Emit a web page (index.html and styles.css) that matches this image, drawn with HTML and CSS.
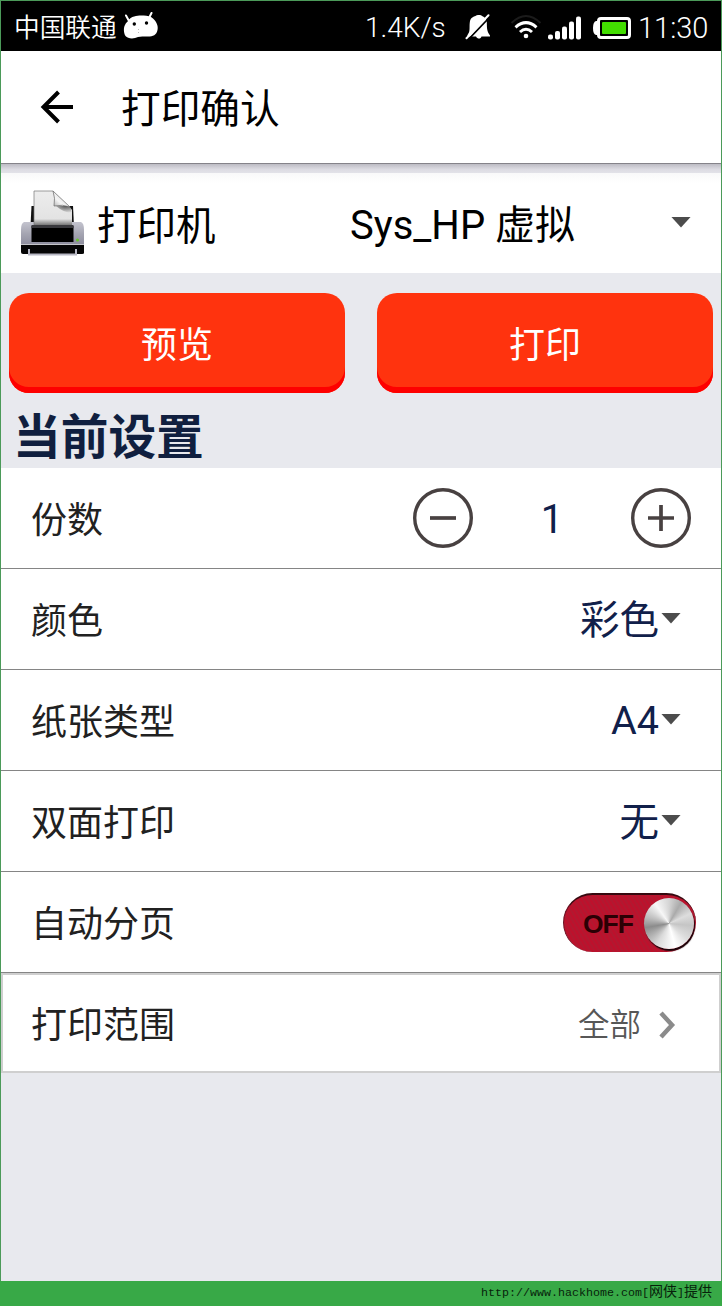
FILE: index.html
```html
<!DOCTYPE html>
<html lang="zh-CN">
<head>
<meta charset="utf-8">
<title>打印确认</title>
<link rel="stylesheet" href="styles.css">
</head>
<body>
<div class="screen">
  <header class="status">
    <span class="carrier">中国联通</span>
    <svg class="droid" width="36" height="28" viewBox="0 0 36 28">
      <path d="M3 3.500 6 9M28.500 1 26 6" stroke="#fff" stroke-width="2" stroke-linecap="round"/>
      <path d="M5 9C8 4 14 3.500 18 3.500C23 3.200 27 3.500 30 6.500C33.500 9.500 35.500 14 34.500 18C33.500 23 30 24.500 25 24.500C20 24.500 18 24 15 25C11 27 5 27 2.500 24C.5 21 .5 15 2 13C2.700 11 4 10.500 5 9Z" fill="#fff"/>
      <circle cx="11.300" cy="12" r="1.700"/><circle cx="23.500" cy="11" r="1.700"/>
      <path d="M15.500 17v1M15.500 20v1" stroke="#bbb"/>
    </svg>
    <span class="speed">1.4K/s</span>
    <svg class="bell" width="26" height="26" viewBox="0 0 26 26">
      <path d="M3 20C5.500 18 4 12 5 7C6 3.500 8.500 2.500 10.500 2C12 .6 16 .6 17.500 2.200C19.500 3 21.500 4.500 21.800 8C22 13 21.500 17 25 21.500V22.500H16.500C16 25 12.500 25.500 11 22.500H2Z" fill="#fff"/>
      <path d="M2.800 26 26 1.800" stroke="#000" stroke-width="1.800"/>
      <path d="M1.500 24.300 23.500 1.300" stroke="#fff" stroke-width="2" stroke-linecap="round"/>
    </svg>
    <svg class="wifi" width="32" height="26" viewBox="0 0 32 26" fill="none" stroke-width="3">
      <path d="M1.500 9Q16-5 30.500 9" stroke="#1b1b1b" stroke-width="2"/>
      <path d="M5.500 13.300Q16 4 26.500 13.300M10 18Q16 12.500 22 18" stroke="#fff"/>
      <circle cx="16" cy="22" r="2.300" fill="#fff"/>
    </svg>
    <svg class="signal" width="34" height="24" viewBox="0 0 34 24" fill="#fff">
      <rect x="0" y="18.500" width="5" height="5" rx="2"/><rect x="7" y="15" width="5" height="8.500" rx="2"/><rect x="14" y="10.500" width="5" height="13" rx="2"/><rect x="21" y="5.500" width="5" height="18" rx="2"/><rect x="28" y=".5" width="5" height="23" rx="2"/>
    </svg>
    <svg class="battery" width="38" height="22" viewBox="0 0 38 22">
      <rect x="5.500" y="1.500" width="31" height="19" rx="2.500" fill="#000" stroke="#fff" stroke-width="3"/>
      <path d="M4.500 4H3Q0 5 0 11T3 18H4.500Z" fill="#fff"/>
      <rect x="9" y="5" width="24" height="12" rx="1" fill="#42dc00"/>
    </svg>
    <span class="clock">11:30</span>
  </header>

  <nav class="appbar">
    <svg width="34" height="34" viewBox="0 0 34 34" fill="none" stroke="#000" stroke-width="4">
      <path d="M18.500 2 3.500 17 18.500 32M3.500 17H33"/>
    </svg>
    <h1>打印确认</h1>
  </nav>
  <div class="shadow"></div>

  <section class="printer">
    <svg class="printer-icon" width="65" height="66" viewBox="0 0 65 66">
      <defs>
        <linearGradient id="paper" x2="0" y2="1"><stop stop-color="#ededed"/><stop offset=".82" stop-color="#e3e3e3"/><stop offset="1" stop-color="#777"/></linearGradient>
        <linearGradient id="case" x2="0" y2="1"><stop stop-color="#c4c4cf"/><stop offset=".5" stop-color="#a4a4b1"/><stop offset="1" stop-color="#8b8b9c"/></linearGradient>
        <linearGradient id="fold" x1="0" y1="1" x2=".7" y2=".3"><stop stop-color="#aaa"/><stop offset=".5" stop-color="#f5f5f5"/><stop offset="1" stop-color="#ddd"/></linearGradient>
        <radialGradient id="crease" cx=".6" cy="0" r="1"><stop stop-color="#555"/><stop offset="1" stop-color="#555" stop-opacity="0"/></radialGradient>
      </defs>
      <path d="M11.500 16H53L54 36H10.500Z" fill="#111"/>
      <path d="M4 32H61Q64 33 64 40V56H1V40Q1 33 4 32Z" fill="url(#case)"/>
      <path d="M11.500 36H53.500V52H11.500Z" fill="#000"/>
      <path d="M11.500 35H53.500V38H11.500Z" fill="#39393d"/>
      <path d="M14 1H33L49 16L52 20V35H14Z" fill="url(#paper)"/>
      <path d="M14 35V1H33" fill="none" stroke="#777" stroke-width=".7"/>
      <path d="M36 16H50L52 23Q44 23 36 16Z" fill="url(#crease)"/>
      <path d="M33 1Q35.500 8 34 16Q43 14 50 17Z" fill="url(#fold)" stroke="#666" stroke-width=".7"/>
      <path d="M1 55H64V63Q64 64 62 64H3Q1 64 1 62Z" fill="#050505"/>
      <path d="M1 54.500H64" stroke="#ddd" stroke-width=".7"/>
      <path d="M9 59V64.500H56V59" fill="none" stroke="#b8b8c4" stroke-width="2"/>
      <circle cx="57.500" cy="50" r="1.500" fill="#68c62c"/>
    </svg>
    <span class="printer-label">打印机</span>
    <span class="printer-name">Sys_HP 虚拟</span>
    <i class="caret"></i>
  </section>

  <div class="actions"><button>预览</button><button>打印</button></div>
  <h2>当前设置</h2>

  <section class="settings">
    <div class="row">
      <span class="label">份数</span>
      <div class="stepper">
        <svg width="60" height="60" viewBox="0 0 60 60" fill="none" stroke="#484141" stroke-width="3.400"><circle cx="30" cy="30" r="28.300"/><path d="M17 30H43" stroke-width="3.700"/></svg>
        <span class="count">1</span>
        <svg width="60" height="60" viewBox="0 0 60 60" fill="none" stroke="#484141" stroke-width="3.400"><circle cx="30" cy="30" r="28.300"/><path d="M17 30H43M30 17V43" stroke-width="3.700"/></svg>
      </div>
    </div>
    <div class="row"><span class="label">颜色</span><span class="value">彩色</span><i class="caret"></i></div>
    <div class="row"><span class="label">纸张类型</span><span class="value latin">A4</span><i class="caret"></i></div>
    <div class="row"><span class="label">双面打印</span><span class="value">无</span><i class="caret"></i></div>
    <div class="row">
      <span class="label">自动分页</span>
      <div class="switch"><span>OFF</span><i class="knob"></i></div>
    </div>
    <div class="row range">
      <span class="label">打印范围</span><span class="scope">全部</span>
      <svg class="chevron" width="18" height="28" viewBox="0 0 18 28" fill="none" stroke="#8b8b8b" stroke-width="4.500"><path d="M3 2 14 14 3 26"/></svg>
    </div>
  </section>
</div>
<footer>http://www.hackhome.com[<span>网侠</span>]<span>提供</span></footer>
</body>
</html>
```
FILE: styles.css
```css
* { box-sizing: border-box; }
body {
  margin: 0;
  width: 722px;
  height: 1306px;
  display: flex;
  flex-direction: column;
  overflow: hidden;
  background: #38a947;
  font-family: "Noto Sans CJK SC", "Liberation Sans", sans-serif;
}
h1, h2 { margin: 0; }
svg { display: block; flex: none; }
.screen {
  height: 1281px;
  border: 1px solid #4b9a59;
  border-bottom: 0;
  background: #e8e9ee;
}
.status {
  height: 50px;
  display: flex;
  align-items: center;
  background: #000;
  color: #fff;
  font-weight: 300;
}
.carrier { margin-left: 13px; width: 109px; font-size: 25.700px; font-weight: 350; line-height: 48px; padding-bottom: 1px; }
.droid { margin-top: -1px; }
.speed { margin-left: 206px; width: 100px; font: 300 28px/50px Roboto, sans-serif; padding-top: 3px; }
.bell { margin-top: 1px; }
.wifi { margin-left: 19px; margin-top: 2px; }
.signal { margin-left: 6px; margin-top: 3px; }
.battery { margin-left: 11px; margin-top: 4px; }
.clock { margin-left: 7px; font: 300 29px/50px Roboto, sans-serif; padding-top: 4px; }
.appbar {
  height: 112px;
  padding-left: 39px;
  display: flex;
  align-items: center;
  background: #fff;
}
.appbar h1 { margin-left: 47px; font-size: 39.700px; font-weight: 400; line-height: 110px; padding-bottom: 2px; }
.shadow {
  height: 10px;
  border-top: 1px solid #85838a;
  background: linear-gradient(#bdbcc4, #dddce3 60%, #e2e2e8);
}
.printer {
  height: 100px;
  display: flex;
  align-items: center;
  padding: 0 30px 0 19px;
  background: linear-gradient(#f9f9fa, #fff 10px);
  font-size: 40px;
  line-height: 100px;
}
.printer-label { margin-left: 12px; width: 253px; font-size: 39.500px; }
.printer-name { flex: 1; padding-top: 5px; font-family: Roboto, "Noto Sans CJK SC", sans-serif; font-size: 40px; }
.caret {
  width: 20px;
  height: 11px;
  margin-top: -2px;
  background: #4c4c4c;
  clip-path: polygon(0 0, 100% 0, 50% 100%);
}
.actions { display: flex; justify-content: space-between; padding: 20px 8px 0; }
.actions button {
  width: 336px;
  height: 100px;
  padding: 0 0 2px;
  border: 0;
  border-radius: 20px;
  background: #ff330e;
  box-shadow: inset 0 -6px #fe0000;
  color: #fff;
  font: 400 36px/52px "Noto Sans CJK SC", sans-serif;
}
h2 { height: 75px; padding-left: 12px; color: #101f3f; font-size: 47.700px; font-weight: 700; line-height: 82px; }
.row {
  height: 101px;
  display: flex;
  align-items: center;
  padding: 0 40px 0 30px;
  border-bottom: 1px solid #858585;
  background: #fff;
}
.label { flex: 1; color: #212121; font-size: 36px; line-height: 98px; padding-bottom: 2px; }
.value { margin-right: 2px; color: #11204a; font-size: 39.500px; line-height: 96px; padding-bottom: 4px; }
.latin, .count { font-family: Roboto, sans-serif; }
.latin { padding: 2px 0 0; }
.stepper { display: flex; align-items: center; margin-right: -10px; }
.count { width: 158px; padding-top: 4px; text-align: center; color: #11204a; font-size: 40px; line-height: 96px; }
.switch {
  width: 133px;
  height: 59px;
  margin-right: -15px;
  padding: 0 2px 0 19px;
  display: flex;
  align-items: center;
  justify-content: space-between;
  border-radius: 30px;
  border-top: 2px solid #360910;
  border-left: 1px solid #6b1021;
  background: repeating-linear-gradient(60deg, #bd112c 0 2px, #b21830 2px 4px);
}
.switch span { padding-top: 1px; color: #2b0004; font: bold 26.500px/56px "Liberation Sans", sans-serif; letter-spacing: -1px; }
.knob {
  width: 50px;
  height: 51px;
  border-radius: 50%;
  box-shadow: 1px 2px 1px #18050a;
  background: conic-gradient(#d5d5d5, #aaa 30deg, #ddd 65deg, #c5c5c5 95deg, #ddd 130deg, #fff 165deg, #dadada 210deg, #8c8c8c 260deg, #bbb 285deg, #f7f7f7 325deg, #d5d5d5);
}
.range { height: 100px; padding-left: 28px; border: 2px solid #cfcfcf; }
.scope { margin-right: 17px; color: #575757; font-size: 31.500px; line-height: 94px; padding-bottom: 2px; font-weight: 350; }
.chevron { margin-right: 3px; margin-top: 4px; }
footer {
  height: 25px;
  padding: 0 10px 0 0;
  color: #07220b;
  text-align: right;
  font: 11.670px/18px "Liberation Mono", "Noto Sans CJK SC", monospace;
}
footer span { font: 14px/18px "Noto Sans CJK SC", sans-serif; }
```
